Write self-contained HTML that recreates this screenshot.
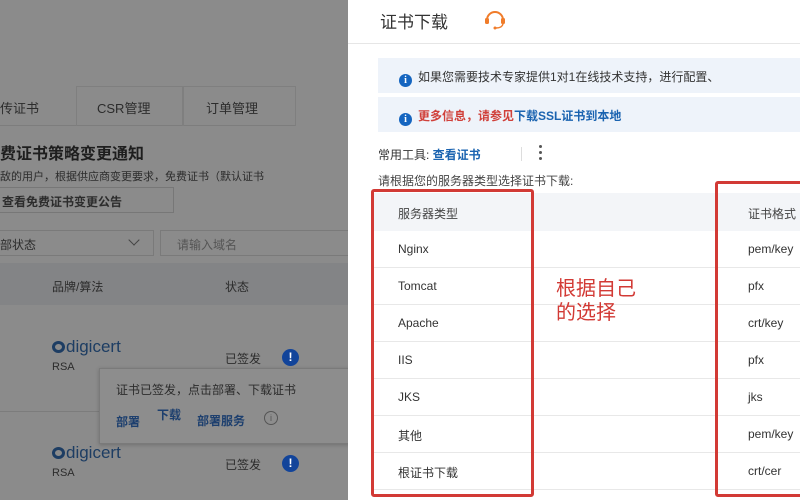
<!DOCTYPE html>
<html><head><meta charset="utf-8"><style>
*{margin:0;padding:0;box-sizing:border-box}
body{width:800px;height:500px;overflow:hidden;position:relative;background:#8b8b8b;font-family:"Liberation Sans","Noto Sans CJK SC",sans-serif;font-size:12px;color:#222}
.a{position:absolute;white-space:nowrap}
.l{color:#2c2c2c}
.panel{position:absolute;left:348px;top:0;width:452px;height:500px;background:#fff}
.blue{color:#1a63b0}
.ic{display:inline-block;width:13px;height:13px;border-radius:50%;background:#1565c0;color:#fff;font-size:10px;font-weight:bold;text-align:center;line-height:13px;vertical-align:-2px;margin-right:6px;font-family:"Liberation Serif",serif}
.row{position:absolute;left:372px;width:428px;height:37px;border-bottom:1px solid #e8e8e8;font-size:12px;color:#333}
.row span{position:absolute;top:11px}
</style></head><body>
<!-- left dim area -->
<div class="a" style="left:0;top:88px;width:296px;height:38px;border-bottom:1px solid #7d7d7d"></div>
<div class="a" style="left:76px;top:86px;width:107px;height:40px;border:1px solid #7f7f7f;border-bottom:none"></div>
<div class="a" style="left:183px;top:86px;width:113px;height:40px;border:1px solid #7f7f7f;border-bottom:none"></div>
<div class="a l" style="left:0;top:98px;font-size:13px">传证书</div>
<div class="a l" style="left:97px;top:98px;font-size:13px">CSR管理</div>
<div class="a l" style="left:206px;top:98px;font-size:13px">订单管理</div>
<div class="a" style="left:0;top:140px;font-size:16px;font-weight:bold;color:#1e1e1e">费证书策略变更通知</div>
<div class="a l" style="left:0;top:168px;font-size:11px">敌的用户，根据供应商变更要求，免费证书（默认证书</div>
<div class="a" style="left:-2px;top:187px;width:176px;height:26px;border:1px solid #777"></div>
<div class="a l" style="left:2px;top:193px;font-size:12px;font-weight:bold">查看免费证书变更公告</div>
<div class="a" style="left:-2px;top:230px;width:156px;height:26px;border:1px solid #7a7a7a"></div>
<div class="a l" style="left:0;top:236px;font-size:12px">部状态</div>
<div class="a" style="left:130px;top:236px;width:8px;height:8px;border-right:1px solid #444;border-bottom:1px solid #444;transform:rotate(45deg)"></div>
<div class="a" style="left:160px;top:230px;width:190px;height:26px;border:1px solid #7a7a7a"></div>
<div class="a" style="left:177px;top:236px;font-size:12px;color:#555">请输入域名</div>
<div class="a" style="left:0;top:263px;width:348px;height:42px;background:#838486"></div>
<div class="a l" style="left:52px;top:278px;font-size:12px">品牌/算法</div>
<div class="a l" style="left:225px;top:278px;font-size:12px">状态</div>
<div class="a" style="left:0;top:411px;width:348px;border-top:1px solid #7c7c7c"></div>
<div class="a" style="left:52px;top:337px;font-size:17px;color:#1d3d63"><span style="display:inline-block;width:13px;height:12px;border:3px solid #1d3d63;border-radius:50%;vertical-align:-1px;margin-right:1px"></span>digicert</div>
<div class="a l" style="left:52px;top:361px;font-size:11px">RSA</div>
<div class="a l" style="left:225px;top:350px;font-size:12px">已签发</div>
<div class="a" style="left:282px;top:349px;width:17px;height:17px;border-radius:50%;background:#12449a;color:#fff;font-size:12px;font-weight:bold;text-align:center;line-height:17px">!</div>
<div class="a" style="left:52px;top:443px;font-size:17px;color:#1d3d63"><span style="display:inline-block;width:13px;height:12px;border:3px solid #1d3d63;border-radius:50%;vertical-align:-1px;margin-right:1px"></span>digicert</div>
<div class="a l" style="left:52px;top:467px;font-size:11px">RSA</div>
<div class="a l" style="left:225px;top:456px;font-size:12px">已签发</div>
<div class="a" style="left:282px;top:455px;width:17px;height:17px;border-radius:50%;background:#12449a;color:#fff;font-size:12px;font-weight:bold;text-align:center;line-height:17px">!</div>
<div class="a" style="left:99px;top:368px;width:251px;height:76px;background:#8d8d8d;border:1px solid #7a7a7a;box-shadow:0 1px 4px rgba(0,0,0,.2)"></div>
<div class="a l" style="left:116px;top:381px;font-size:12px">证书已签发，点击部署、下载证书</div>
<div class="a" style="left:116px;top:413px;font-size:12px;color:#1d3f6e;font-weight:bold">部署</div>
<div class="a" style="left:157px;top:406px;font-size:12px;color:#1d3f6e;font-weight:bold">下载</div>
<div class="a" style="left:197px;top:412px;font-size:12px;color:#1d3f6e;font-weight:bold">部署服务</div>
<div class="a" style="left:264px;top:411px;width:14px;height:14px;border:1px solid #555;border-radius:50%;font-size:9px;text-align:center;line-height:12px;color:#555">i</div>

<!-- right panel -->
<div class="panel"></div>
<div class="a" style="left:380px;top:8px;font-size:17px;color:#333">证书下载</div>
<svg class="a" style="left:482px;top:8px" width="26" height="22" viewBox="0 0 26 22"><path d="M5 12 A8 8 0 0 1 21 12" fill="none" stroke="#f07c2a" stroke-width="2"/><rect x="3" y="10" width="4" height="6" rx="1.5" fill="#f07c2a"/><rect x="19" y="10" width="4" height="6" rx="1.5" fill="#f07c2a"/><path d="M21 16 Q20 20 14 20" fill="none" stroke="#f07c2a" stroke-width="1.5"/><circle cx="13" cy="20" r="1.5" fill="#f07c2a"/></svg>
<div class="a" style="left:348px;top:43px;width:452px;border-top:1px solid #e6e6e6"></div>
<div class="a" style="left:378px;top:58px;width:422px;height:35px;background:#eef3fa"></div>
<div class="a" style="left:399px;top:68px;font-size:12px;color:#333"><span class="ic">i</span>如果您需要技术专家提供1对1在线技术支持，进行配置、</div>
<div class="a" style="left:378px;top:97px;width:422px;height:35px;background:#eef3fa"></div>
<div class="a" style="left:399px;top:107px;font-size:12px;font-weight:bold"><span class="ic">i</span><span style="color:#d0403a">更多信息，请参见</span><span class="blue">下载SSL证书到本地</span></div>
<div class="a" style="left:378px;top:146px;font-size:12px;color:#333">常用工具: <span class="blue" style="font-weight:bold">查看证书</span></div>
<div class="a" style="left:521px;top:147px;height:14px;border-left:1px solid #ddd"></div>
<div class="a" style="left:539px;top:145px;width:3px;font-size:0"><div style="width:3px;height:3px;background:#555;border-radius:50%;margin-bottom:3px"></div><div style="width:3px;height:3px;background:#555;border-radius:50%;margin-bottom:3px"></div><div style="width:3px;height:3px;background:#555;border-radius:50%"></div></div>
<div class="a" style="left:378px;top:172px;font-size:12px;color:#444">请根据您的服务器类型选择证书下载:</div>
<div class="a" style="left:372px;top:193px;width:428px;height:38px;background:#f3f5f8"></div>
<div class="a" style="left:398px;top:205px;font-size:12px;color:#444">服务器类型</div>
<div class="a" style="left:748px;top:205px;font-size:12px;color:#444">证书格式</div>
<div class="row" style="top:231px"><span style="left:26px">Nginx</span><span style="left:376px">pem/key</span></div>
<div class="row" style="top:268px"><span style="left:26px">Tomcat</span><span style="left:376px">pfx</span></div>
<div class="row" style="top:305px"><span style="left:26px">Apache</span><span style="left:376px">crt/key</span></div>
<div class="row" style="top:342px"><span style="left:26px">IIS</span><span style="left:376px">pfx</span></div>
<div class="row" style="top:379px"><span style="left:26px">JKS</span><span style="left:376px">jks</span></div>
<div class="row" style="top:416px"><span style="left:26px">其他</span><span style="left:376px">pem/key</span></div>
<div class="row" style="top:453px"><span style="left:26px">根证书下载</span><span style="left:376px">crt/cer</span></div>
<div class="a" style="left:371px;top:189px;width:163px;height:308px;border:3px solid #d23a35;border-radius:3px"></div>
<div class="a" style="left:715px;top:181px;width:100px;height:316px;border:3px solid #d23a35;border-radius:3px"></div>
<div class="a" style="left:556px;top:277px;font-size:20px;line-height:24px;color:#d23a35;white-space:normal;width:120px">根据自己<br>的选择</div>
</body></html>
